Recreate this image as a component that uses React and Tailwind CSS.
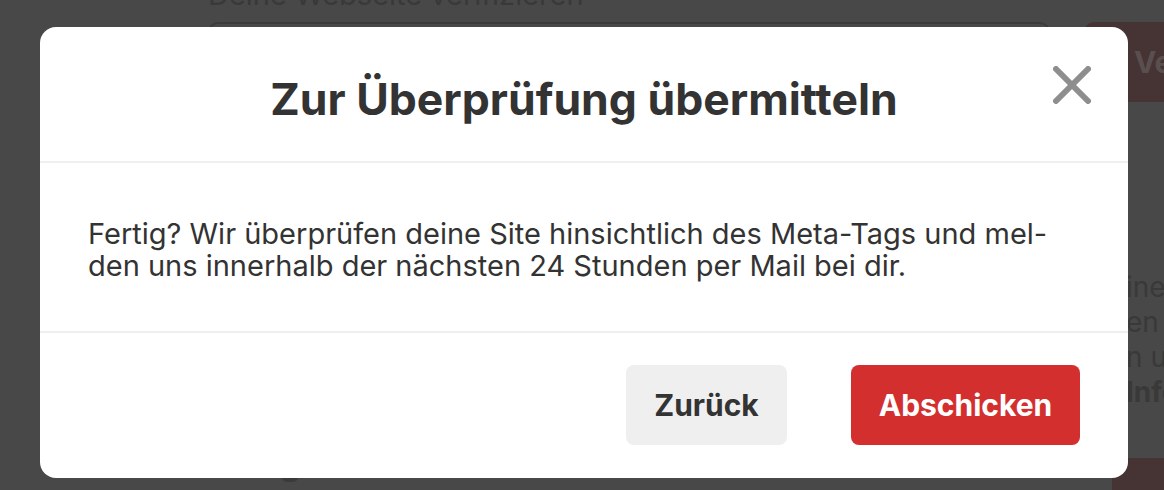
import React from 'react';

const App = () => {
  return (
    <div className="relative w-[1164px] h-[490px] overflow-hidden bg-[#484848]" style={{ fontFamily: 'Inter, "Liberation Sans", sans-serif' }}>
      {/* Dimmed page behind the modal */}
      <div className="pl-[208px] -mt-[22px]">
        <h2 className="text-[29px] leading-[34px] text-[#393939]">Deine Webseite verifizieren</h2>
        <div className="flex gap-[34px] mt-[10px]">
          <div className="shrink-0 w-[842px] h-[80px] rounded-[10px] border-2 border-[#3b3b3b]" />
          <div className="shrink-0 w-[120px] h-[80px] rounded-l-[10px] bg-[#463333] flex items-center pl-[50px] text-[30px] font-bold text-[#5a4f4f]">
            Verifizieren
          </div>
        </div>
      </div>
      <div className="absolute left-[1126px] top-[270px] text-[28px] leading-[35px] text-[#393939] whitespace-nowrap">
        <p>ine</p>
        <p>en w</p>
        <p>n u</p>
        <p className="font-bold">Info</p>
      </div>
      <div className="absolute left-[1112px] top-[458px] w-[60px] h-[40px] rounded-tl-[10px] bg-[#463333]" />
      <div className="absolute left-[282px] top-[472px] w-[16px] h-[10px] rounded-full bg-[#3a3a3a]" />

      {/* Modal */}
      <div className="absolute left-[40px] top-[27px] w-[1088px] h-[451px] bg-white rounded-[16px] flex flex-col">
        <div className="relative h-[136px] flex items-center justify-center border-b-2 border-[#efefef]">
          <h1 className="text-[44.5px] leading-[54px] font-bold text-[#333333] mt-[9px]">Zur Überprüfung übermitteln</h1>
          <button className="absolute right-[36px] top-[38px] w-[40px] h-[40px] flex items-center justify-center">
            <svg width="38" height="38" viewBox="0 0 38 38">
              <path d="M3 3 L35 35 M35 3 L3 35" stroke="#8e8e8e" strokeWidth="6" strokeLinecap="round" />
            </svg>
          </button>
        </div>
        <div className="h-[170px] flex items-center px-[48px] pt-[6px] border-b-2 border-[#efefef]">
          <p className="text-[29px] leading-[32px] text-[#333333] whitespace-nowrap">
            Fertig? Wir überprüfen deine Site hinsichtlich des Meta-Tags und mel-
            <br />
            den uns innerhalb der nächsten 24 Stunden per Mail bei dir.
          </p>
        </div>
        <div className="flex-1 flex items-start justify-end gap-[64px] pt-[32px] pr-[48px]">
          <button className="w-[161px] h-[80px] rounded-[8px] bg-[#efefef] text-[30px] font-bold text-[#333333]">
            Zurück
          </button>
          <button className="w-[229px] h-[80px] rounded-[8px] bg-[#d32f2f] text-[30px] font-bold text-white">
            Abschicken
          </button>
        </div>
      </div>
    </div>
  );
};

export default App;
